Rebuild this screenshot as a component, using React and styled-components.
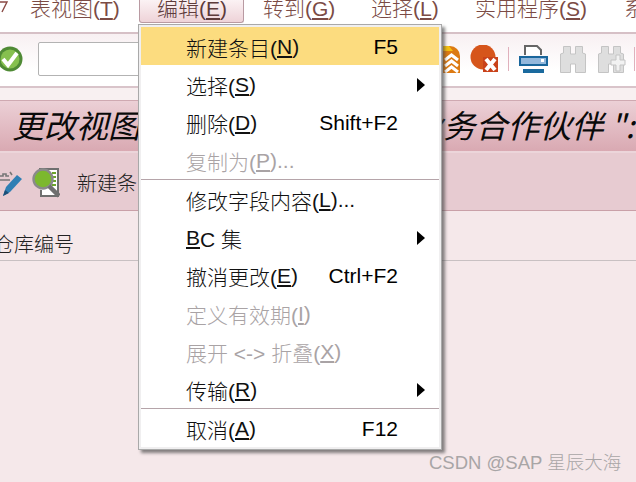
import React from "react";
import styled, { createGlobalStyle } from "styled-components";

const Global = createGlobalStyle`
  html, body { margin: 0; padding: 0; background: #f5e8ea; }
  body { width: 636px; height: 482px; overflow: hidden; font-family: "Liberation Sans", "Noto Sans CJK SC", sans-serif; }
`;
const Page = styled.div`position: relative; width: 636px; height: 482px; overflow: hidden; background: #f5e8ea; display: flex; flex-direction: column;`;
const MenuBar = styled.div`height: 32px; flex: none; background: #fff; display: flex; align-items: flex-start; white-space: nowrap; overflow: hidden; border-bottom: 2px solid #d6c0c6; box-sizing: content-box;`;
const MenuStub = styled.svg`width: 30px; height: 14px; flex: none;`;
const MenuEntry = styled.div`
  font-size: 21px; line-height: 18px; color: #7b4b45; flex: none;
  width: ${p => p.$w}px; padding-left: ${p => p.$pl}px; box-sizing: border-box; height: 23px;
  font-weight: 300;
  ${p => p.$open && `border: 1px solid #b99aa2; border-top: 0; border-radius: 0 0 3px 3px; background: linear-gradient(#fbf2f4,#eed3d8); color:#5e3b3b; padding-left: 17px;`}
  u { text-underline-offset: 2px; }
`;
const Toolbar = styled.div`height: 52px; flex: none; box-sizing: border-box; padding-bottom: 2px; background: linear-gradient(#f8f0f2, #fff 70%); display: flex; align-items: center; position: relative;`;
const Field = styled.div`width: 110px; height: 34px; margin-left: 15px; box-sizing: border-box; border: 1px solid #b3b3b3; border-radius: 2px; background: #fff; flex: none;`;
const Check = styled.svg`width: 25px; height: 28px; margin-left: -2px; flex: none;`;
const RightIcons = styled.div`margin-left: auto; display: flex; align-items: center; height: 100%; width: 196px; flex: none;`;
const Icon = styled.svg`flex: none; margin-left: ${p => p.$ml || 0}px;`;
const Sep = styled.div`width: 1px; height: 24px; background: #e0b0bc; flex: none; margin-left: ${p => p.$ml}px;`;
const Band = styled.div`height: 12px; flex: none; background: #f8f0f1; border-top: 2px solid #d9c4ca; border-bottom: 1px solid #cfa9b1;`;
const TitleBar = styled.div`height: 52px; flex: none; box-sizing: border-box; background: linear-gradient(#ecd0d6, #d9a9b2); border-bottom: 2px solid #ecd5da; display: flex; align-items: center; padding-left: 12px; white-space: nowrap; overflow: hidden;`;
const Title = styled.div`font-size: 32px; font-style: italic; font-weight: 400; color: #0a0a0a; margin-top: -5px; font-family: "Noto Sans CJK SC", sans-serif;`;
const ActionBar = styled.div`height: 58px; flex: none; box-sizing: border-box; background: #e7cbd1; border-bottom: 1px solid #c9a0a8; display: flex; align-items: center; padding-top: 2px;`;
const ActionText = styled.div`font-size: 20px; font-weight: 300; color: #222; margin-left: 17px; white-space: nowrap; font-family: "Noto Sans CJK SC", sans-serif;`;
const TableHead = styled.div`height: 50px; flex: none; box-sizing: border-box; border-bottom: 1px solid #c8c0c2; padding: 19px 0 0 0; overflow: hidden;`;
const HeadText = styled.div`font-size: 20px; font-weight: 300; line-height: 28px; color: #222; margin-left: -6px; font-family: "Noto Sans CJK SC", sans-serif;`;

const Menu = styled.div`position: absolute; left: 138px; top: 24px; width: 304px; height: 426px; box-sizing: border-box; background: #fff; border: 3px solid #f0eff0; outline: 1px solid #a9a9a9; outline-offset: -1px; box-shadow: 3px 3px 3px rgba(70,70,70,.65); display: flex; flex-direction: column; padding: 0;`;
const Item = styled.div`
  height: 38px; flex: none; display: flex; align-items: center; position: relative; padding: 2px 0 0 45px; box-sizing: border-box;
  font-size: 21px; font-weight: 300; white-space: nowrap; color: ${p => p.$off ? "#a9a3a5" : "#111"};
  background: ${p => p.$active ? "#fcdc7f" : "transparent"};
  u { text-underline-offset: 2px; }
`;
const Shortcut = styled.span`position: absolute; right: 41px; font-size: 21px; font-weight: 400; color: #000;`;
const Arrow = styled.span`position: absolute; left: 276px; top: 13px; width: 0; height: 0; border-left: 8px solid #000; border-top: 7.5px solid transparent; border-bottom: 7.5px solid transparent;`;
const Divider = styled.div`height: 1px; flex: none; background: #b5a4a9; margin: 0;`;
const Watermark = styled.div`position: absolute; left: 429px; top: 451px; font-size: 18.5px; line-height: 24px; color: #a8a5a6; white-space: nowrap; font-weight: 300;`;

const rows = [
  { label: <>新建条目(<u>N</u>)</>, sc: "F5", active: true },
  { label: <>选择(<u>S</u>)</>, arrow: true },
  { label: <>删除(<u>D</u>)</>, sc: "Shift+F2" },
  { label: <>复制为(<u>P</u>)...</>, off: true, divider: true },
  { label: <>修改字段内容(<u>L</u>)...</> },
  { label: <><u>B</u>C 集</>, arrow: true },
  { label: <>撤消更改(<u>E</u>)</>, sc: "Ctrl+F2" },
  { label: <>定义有效期(<u>I</u>)</>, off: true },
  { label: <>展开 &lt;-&gt; 折叠(<u>X</u>)</>, off: true },
  { label: <>传输(<u>R</u>)</>, arrow: true, divider: true },
  { label: <>取消(<u>A</u>)</>, sc: "F12" },
];

export default function App() {
  return (
    <Page>
      <Global />
      <MenuBar>
        <MenuStub viewBox="0 0 30 14">
          <path d="M0 2h7L2 12" fill="none" stroke="#8a4a45" strokeWidth="1.4" />
        </MenuStub>
        <MenuEntry $w={109} $pl={0}>表视图(<u>T</u>)</MenuEntry>
        <MenuEntry $w={105} $open>编辑(<u>E</u>)</MenuEntry>
        <MenuEntry $w={127} $pl={19}>转到(<u>G</u>)</MenuEntry>
        <MenuEntry $w={104} $pl={0}>选择(<u>L</u>)</MenuEntry>
        <MenuEntry $w={149} $pl={0}>实用程序(<u>S</u>)</MenuEntry>
        <MenuEntry $w={30} $pl={0}>系统</MenuEntry>
      </MenuBar>
      <Toolbar>
        <Check viewBox="0 0 25 28">
          <circle cx="12" cy="14" r="12.5" fill="#4f8a35" />
          <circle cx="12" cy="14" r="9.5" fill="#86c04f" />
          <path d="M5 14l5 6L19 8" fill="none" stroke="#fff" strokeWidth="4" />
        </Check>
        <Field />
        <RightIcons>
          <Icon width="18" height="27" viewBox="0 0 18 27" $ml={3}>
            <path d="M0 0h7a10 10 0 0 1 10 10v17H0z" fill="#dc7a12" />
            <path d="M0 0h6l4 5H0z" fill="#f5c010" />
            <path d="M2 14l6.500-5 6.500 5M2 20l6.500-5 6.500 5M2 26l6.500-5 6.500 5" fill="none" stroke="#fff" strokeWidth="3" />
          </Icon>
          <Icon width="28" height="28" viewBox="0 0 28 28" $ml={9}>
            <circle cx="13" cy="12" r="12.500" fill="#d6551b" />
            <path d="M13 12h15v15H13z" fill="#c9421a" />
            <path d="M16 14l9 11M25 14l-9 11" stroke="#fff" strokeWidth="4" />
          </Icon>
          <Sep $ml={10} />
          <Icon width="29" height="28" viewBox="0 0 29 28" $ml={10}>
            <path d="M6 10V1h12l4 4v5" fill="#fff" stroke="#666" strokeWidth="2" />
            <path d="M0 11h29v10H0z" fill="#19669c" />
            <path d="M2 13h25v6H2z" fill="#93b8dc" />
            <path d="M22 14h3v3h-3z" fill="#fff" />
            <path d="M4 24h21v4H4z" fill="#1a6a9e" />
          </Icon>
          <Icon width="26" height="28" viewBox="0 0 26 28" $ml={12}>
            <path d="M.5 27.500V9l3-1V1.500h7V9h5V1.500h7V8l3 1v18.500h-10V19h-5v8.500z" fill="#dedede" stroke="#c4c4c4" />
          </Icon>
          <Icon width="28" height="28" viewBox="0 0 28 28" $ml={12}>
            <path d="M.5 27.500V9l3-1V1.500h7V9h5V1.500h7V8l3 1v18.500h-10V19h-5v8.500z" fill="#dedede" stroke="#c4c4c4" />
            <path d="M13 15h5v-5h4v5h5v5h-5v6h-4v-6h-5z" fill="#f2f2f2" stroke="#c4c4c4" />
          </Icon>
          <Sep $ml={8} />
        </RightIcons>
      </Toolbar>
      <Band />
      <TitleBar>
        <Title>更改视图"仓库编号的相关联业务合作伙伴 ":</Title>
      </TitleBar>
      <ActionBar>
        <Icon width="23" height="28" viewBox="0 0 23 28">
          <path d="M0 7h3v-2h3v2h3M0 11h10M10 3l2 3" stroke="#777" strokeWidth="1.600" fill="none" />
          <path d="M3 27l3-9L17 6l5 4L10 23z" fill="#2f7fb4" />
          <path d="M3 27l2-6 4 3z" fill="#1c4f78" />
        </Icon>
        <Icon width="28" height="30" viewBox="0 0 28 30" $ml={9}>
          <path d="M7 1h19v27H9V22" fill="#fff" stroke="#6f6f6f" strokeWidth="2" />
          <path d="M20 5h4M20 9h4M20 13h4M20 17h4" stroke="#6aa52a" strokeWidth="2" />
          <circle cx="11" cy="11" r="9.500" fill="#7cb82e" stroke="#8a8a8a" strokeWidth="2.400" />
          <path d="M17 18l10 10" stroke="#6f6f6f" strokeWidth="4.500" />
        </Icon>
        <ActionText>新建条目</ActionText>
      </ActionBar>
      <TableHead>
        <HeadText>仓库编号</HeadText>
      </TableHead>
      <Menu>
        {rows.map((r, i) => (
          <React.Fragment key={i}>
            <Item $active={r.active} $off={r.off}>
              {r.label}
              {r.sc && <Shortcut>{r.sc}</Shortcut>}
              {r.arrow && <Arrow />}
            </Item>
            {r.divider && <Divider />}
          </React.Fragment>
        ))}
      </Menu>
      <Watermark>CSDN @SAP 星辰大海</Watermark>
    </Page>
  );
}
